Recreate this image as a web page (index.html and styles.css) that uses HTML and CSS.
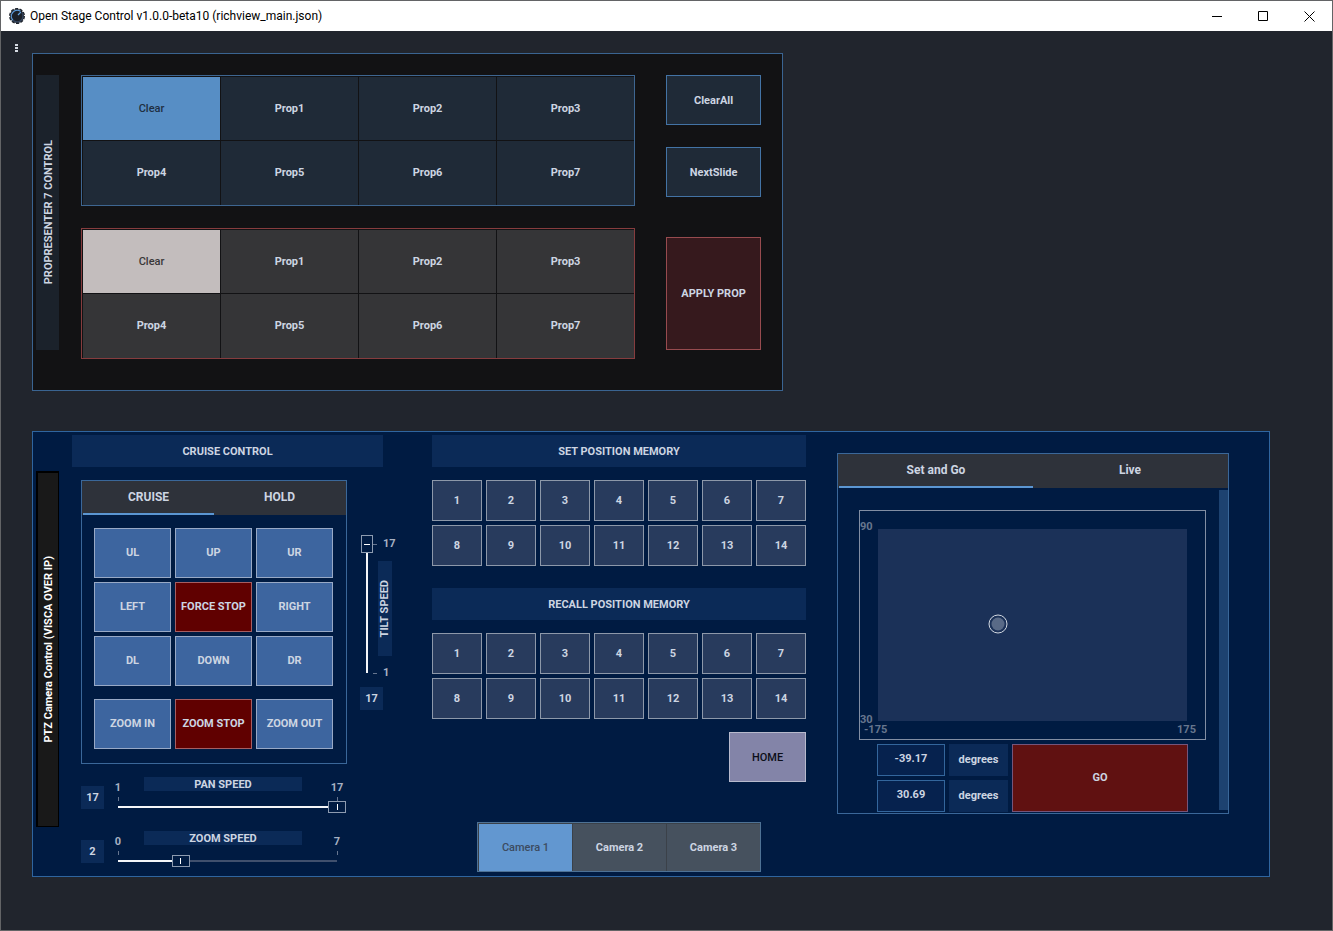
FILE: index.html
```html
<!DOCTYPE html>
<html lang="en">
<head>
<meta charset="utf-8">
<title>Open Stage Control v1.0.0-beta10 (richview_main.json)</title>
<link rel="stylesheet" href="styles.css">
</head>
<body>
<header class="titlebar">
  <svg class="app-icon" viewBox="0 0 16 16" aria-hidden="true">
    <circle cx="8" cy="8" r="7" fill="#1b2029"/>
    <circle cx="8" cy="8" r="7.300" fill="none" stroke="#1b2029" stroke-width="1.400" stroke-dasharray="3.200 1.400"/>
    <path d="M4 12.300A5.900 5.900 0 0 1 11.500 3.300" fill="none" stroke="#5c9bdc" stroke-width="1.200"/>
    <path d="M12.800 4.500A5.900 5.900 0 0 1 4 12.300" fill="none" stroke="#35455f" stroke-width="1.200"/>
    <path d="M9 7l2.800-2.800" stroke="#6aa9e6" stroke-width="1.200"/>
  </svg>
  <h1 class="title">Open Stage Control v1.0.0-beta10 (richview_main.json)</h1>
  <button class="win-btn" aria-label="Minimize"><svg viewBox="0 0 11 11"><path d="M0 5.500h10"/></svg></button>
  <button class="win-btn" aria-label="Maximize"><svg viewBox="0 0 11 11"><path d="M.5.5h9v9h-9z"/></svg></button>
  <button class="win-btn" aria-label="Close"><svg viewBox="0 0 11 11"><path d="M.5.5l10 10M10.500.5l-10 10"/></svg></button>
</header>

<main class="workspace">
  <button class="menu-btn" aria-label="Menu"><i></i><i></i><i></i></button>

  <div class="panels">
    <section class="presenter">
      <h2 class="side-label slate"><span>PROPRESENTER 7 CONTROL</span></h2>
      <div class="prop-groups">
        <div class="switch blue">
          <button class="on">Clear</button><button>Prop1</button><button>Prop2</button><button>Prop3</button>
          <button>Prop4</button><button>Prop5</button><button>Prop6</button><button>Prop7</button>
        </div>
        <div class="switch red">
          <button class="on">Clear</button><button>Prop1</button><button>Prop2</button><button>Prop3</button>
          <button>Prop4</button><button>Prop5</button><button>Prop6</button><button>Prop7</button>
        </div>
      </div>
      <div class="actions">
        <button class="action">ClearAll</button>
        <button class="action">NextSlide</button>
        <button class="action apply">APPLY PROP</button>
      </div>
    </section>

    <section class="camera">
      <h2 class="side-label black"><span>PTZ Camera Control (VISCA OVER IP)</span></h2>
      <div class="columns">
        <div class="cruise">
          <h3 class="heading">CRUISE CONTROL</h3>
          <div class="cruise-body">
            <div class="tab-box">
              <div class="tabs"><button class="current">CRUISE</button><button>HOLD</button></div>
              <div class="pad">
                <button>UL</button><button>UP</button><button>UR</button>
                <button>LEFT</button><button class="stop">FORCE STOP</button><button>RIGHT</button>
                <button>DL</button><button>DOWN</button><button>DR</button>
              </div>
              <div class="pad zoom-pad">
                <button>ZOOM IN</button><button class="stop">ZOOM STOP</button><button>ZOOM OUT</button>
              </div>
            </div>
            <div class="tilt">
              <div class="tilt-fader">
                <input id="tilt" class="fader vertical" type="range" min="1" max="17" value="17">
                <div class="tilt-scale">
                  <span class="mark">17</span>
                  <label class="tilt-name" for="tilt"><span>TILT SPEED</span></label>
                  <span class="mark">1</span>
                </div>
              </div>
              <output class="value" for="tilt">17</output>
            </div>
            <div class="speeds">
              <div class="speed">
                <output class="value" for="pan">17</output>
                <div class="speed-main">
                  <div class="scale"><span class="num">1</span><label for="pan">PAN SPEED</label><span class="num">17</span></div>
                  <input id="pan" class="fader" type="range" min="1" max="17" value="17" style="--fill:100%">
                </div>
              </div>
              <div class="speed">
                <output class="value" for="zoom">2</output>
                <div class="speed-main">
                  <div class="scale"><span class="num">0</span><label for="zoom">ZOOM SPEED</label><span class="num">7</span></div>
                  <input id="zoom" class="fader" type="range" min="0" max="7" value="2" style="--fill:28.57%">
                </div>
              </div>
            </div>
          </div>
        </div>

        <div class="memory">
          <h3 class="heading">SET POSITION MEMORY</h3>
          <div class="slots">
            <button>1</button><button>2</button><button>3</button><button>4</button><button>5</button><button>6</button><button>7</button>
            <button>8</button><button>9</button><button>10</button><button>11</button><button>12</button><button>13</button><button>14</button>
          </div>
          <h3 class="heading recall">RECALL POSITION MEMORY</h3>
          <div class="slots">
            <button>1</button><button>2</button><button>3</button><button>4</button><button>5</button><button>6</button><button>7</button>
            <button>8</button><button>9</button><button>10</button><button>11</button><button>12</button><button>13</button><button>14</button>
          </div>
          <button class="home">HOME</button>
          <div class="switch cams">
            <button class="on">Camera 1</button><button>Camera 2</button><button>Camera 3</button>
          </div>
        </div>

        <div class="tab-box position">
          <div class="tabs"><button class="current">Set and Go</button><button>Live</button></div>
          <div class="position-body">
            <div class="position-main">
              <div class="xy">
                <div class="xy-area"><span class="handle"></span></div>
                <div class="axis-y"><span>90</span><span>30</span></div>
                <div class="axis-x"><span>-175</span><span>175</span></div>
              </div>
              <div class="goto">
                <input id="deg-x" type="text" value="-39.17">
                <label for="deg-x">degrees</label>
                <input id="deg-y" type="text" value="30.69">
                <label for="deg-y">degrees</label>
                <button class="go">GO</button>
              </div>
            </div>
            <div class="scrollbar"></div>
          </div>
        </div>
      </div>
    </section>
  </div>
</main>
</body>
</html>
```

FILE: styles.css
```css
* { box-sizing: border-box; }

body {
  margin: 0;
  min-height: 100vh;
  display: flex;
  flex-direction: column;
  border: 1px solid #636466;
  background: #21252d;
  color: #cdd5e2;
  font: 700 11px/14px Roboto, "Liberation Sans", sans-serif;
}

h1, h2, h3 { margin: 0; font: inherit; }

button, input {
  margin: 0;
  padding: 0;
  border: 0;
  border-radius: 0;
  color: inherit;
  font: inherit;
}

button { background: none; }

/* Window title bar */
.titlebar {
  display: flex;
  align-items: center;
  height: 30px;
  padding-left: 8px;
  background: #fff;
  color: #000;
}
.app-icon { width: 16px; height: 16px; margin-right: 5px; }
.title { flex: 1; font: 400 12px/16px Roboto, "Liberation Sans", sans-serif; }
.win-btn {
  display: grid;
  place-items: center;
  width: 46px;
  height: 30px;
}
.win-btn svg {
  width: 11px;
  height: 11px;
  fill: none;
  stroke: #000;
}

/* Workspace */
.workspace { display: flex; flex: 1; padding-right: 62px; }
.menu-btn {
  display: flex;
  flex-direction: column;
  align-items: center;
  gap: 1px;
  width: 31px;
  height: 22px;
  padding-top: 13px;
}
.menu-btn i { width: 3px; height: 2px; background: #d5dae2; }
.panels { flex: 1; padding: 22px 0 53px; }

.side-label { display: grid; place-items: center; width: 23px; padding-left: 2px; }
.side-label span, .tilt-name span {
  writing-mode: vertical-rl;
  transform: rotate(180deg);
  white-space: nowrap;
}
.slate { height: 275px; background: #1b222b; }
.black {
  height: 356px;
  margin-top: 36px;
  border: solid #000;
  border-width: 2px 1px 1px 2px;
  background: #191919;
  color: #fff;
}

/* ProPresenter panel */
.presenter {
  display: grid;
  grid-template-columns: 23px 1fr 95px;
  width: 60.67%;
  padding: 21px 21px 31px 3px;
  border: 1px solid #3a6491;
  background: #121214;
}
.prop-groups { display: grid; gap: 22px; margin: 0 31px 0 22px; }

.switch {
  display: grid;
  grid-template: 63fr 64fr / repeat(4, 1fr);
  gap: 1px;
  height: 131px;
  padding: 1px 0 0 1px;
  border: 1px solid #3e6691;
}
.switch .on { font-weight: 500; }
.blue button { background: #1f2a37; }
.blue .on { background: #578ec5; color: #1f2f42; }
.red { border-color: #863c3e; }
.red button { background: #353537; }
.red .on { background: #c3bdbd; color: #3a3839; }

.actions { display: flex; flex-direction: column; }
.action {
  height: 50px;
  margin-bottom: 22px;
  padding-top: 2px;
  border: 1px solid #4373a5;
  background: #1f2a37;
}
.apply {
  height: 113px;
  margin: 18px 0 0;
  padding: 0;
  border-color: #974b4f;
  background: #36191d;
}

/* Camera panel */
.camera {
  display: flex;
  gap: 13px;
  margin-top: 40px;
  padding: 3px 40px 4px 3px;
  border: 1px solid #2f659f;
  background: #001b42;
}
.columns {
  display: grid;
  flex: 1;
  grid-template-columns: 329fr 374fr 392fr;
  gap: 31px;
  align-items: start;
}
.heading {
  height: 32px;
  padding-top: 1px;
  line-height: 32px;
  background: #0b2a57;
  text-align: center;
}
.value {
  display: grid;
  place-items: center;
  width: 23px;
  height: 23px;
  background: #0b2a57;
}

.cruise .heading { margin-right: 18px; }
.cruise-body {
  display: grid;
  grid-template-columns: 1fr 41px;
  gap: 13px;
  padding: 13px 0 0 9px;
}

.tab-box { border: 1px solid #3a6799; }
.tabs {
  display: grid;
  grid-template-columns: 1fr 1fr;
  height: 34px;
  padding: 0 1px;
  background: #2e323a;
  font-size: 12px;
}
.tabs button { border-bottom: 2px solid transparent; }
.tabs .current { border-color: #5b96d2; }

.pad {
  display: grid;
  grid-template-columns: repeat(3, 1fr);
  grid-auto-rows: 50px;
  gap: 4px;
  padding: 13px 13px 0 12px;
}
.zoom-pad { padding-bottom: 14px; }
.pad button {
  border: 1px solid #98a9c6;
  background: #3d659f;
  white-space: nowrap;
}
.pad .stop { border-color: #a55e62; background: #600000; }

/* Faders */
.fader {
  --fill: 100%;
  display: block;
  appearance: none;
  width: 100%;
  height: 12px;
  background: linear-gradient(90deg, #f4f6f9 var(--fill), #40506d var(--fill)) center / calc(100% - 18px) 2px no-repeat;
}
.fader::-webkit-slider-thumb {
  appearance: none;
  width: 18px;
  height: 12px;
  border: 1px solid #8d9bb0;
  background: linear-gradient(#fff, #fff) center / 1px 6px no-repeat #001b42;
}
.vertical {
  writing-mode: vertical-lr;
  direction: rtl;
  width: 12px;
  height: 147px;
  background: linear-gradient(#f4f6f9, #f4f6f9) center / 2px calc(100% - 18px) no-repeat;
}
.vertical::-webkit-slider-thumb {
  width: 12px;
  height: 18px;
  background: linear-gradient(#fff, #fff) center / 6px 1px no-repeat #001b42;
}

.tilt { padding-top: 55px; }
.tilt-fader { display: flex; padding-left: 1px; margin-bottom: 5px; }
.tilt-scale { padding-top: 2px; }
.mark {
  display: flex;
  align-items: center;
  gap: 6px;
  color: #a7b1c2;
}
.mark::before { content: ""; width: 4px; height: 1px; background: #66758f; }
.tilt-name {
  display: grid;
  place-items: center;
  width: 14px;
  height: 95px;
  margin: 10px 0 10px 5px;
  background: #0b2a57;
}

.speeds { display: grid; gap: 18px; padding-right: 1px; }
.speed { display: flex; gap: 5px; }
.speed .value { margin-top: 9px; }
.speed-main { flex: 1; }
.scale {
  display: grid;
  grid-template-columns: 18px 1fr 18px;
  height: 24px;
}
.scale label {
  height: 14px;
  margin: 0 26px 0 17px;
  background: #0b2a57;
  line-height: 16px;
  text-align: center;
}
.num {
  display: flex;
  flex-direction: column;
  align-items: center;
  align-self: end;
  gap: 2px;
  color: #a7b1c2;
}
.num::after { content: ""; width: 1px; height: 4px; background: #66758f; }

/* Position memory */
.memory { display: flex; flex-direction: column; }
.slots {
  display: grid;
  grid-template-columns: repeat(7, 1fr);
  grid-auto-rows: 41px;
  gap: 4px;
  margin-top: 13px;
}
.slots button { border: 1px solid #8d98a9; background: #283b5d; }
.recall { margin-top: 22px; }
.home {
  align-self: end;
  width: 77px;
  height: 50px;
  margin-top: 13px;
  padding-top: 2px;
  border: 1px solid #b7bacd;
  background: #8384a8;
  color: #0c0e18;
  font-weight: 500;
}
.cams {
  grid-template: 1fr / repeat(3, 1fr);
  height: 50px;
  margin: 40px 45px 0;
  border-color: #4e7295;
  background: #3b4149;
}
.cams button { background: #46515e; }
.cams .on { background: #6297d0; color: #3c4b60; }

/* Position pad */
.position { margin-top: 18px; }
.position-body { display: flex; }
.position-main { flex: 1; padding: 22px 13px 1px 21px; }
.scrollbar { width: 9px; margin: 2px 0 3px; background: #1d4270; }
.xy {
  display: grid;
  grid-template: 18px 1fr 18px / 18px 1fr 18px;
  height: 230px;
  border: 1px solid #828ea3;
  color: #67768e;
  line-height: 8px;
}
.xy-area { position: relative; grid-area: 2 / 2; background: #1b3158; }
.handle {
  position: absolute;
  left: 38.8%;
  top: 49.5%;
  width: 19px;
  height: 19px;
  padding: 2px;
  border: 1px solid #d3d9e2;
  border-radius: 50%;
  background: #596a87 content-box;
  transform: translate(-50%, -50%);
}
.axis-y {
  display: flex;
  grid-area: 1 / 1 / -1 / 2;
  flex-direction: column;
  justify-content: space-between;
  padding: 12px 0 15px;
}
.axis-x {
  display: flex;
  grid-area: 3 / 1 / 4 / -1;
  align-items: center;
  justify-content: space-between;
  padding: 0 9px 0 4px;
}
.goto {
  display: grid;
  grid-template: 32px 32px / 68px 59px 1fr;
  gap: 4px;
  margin: 4px 18px 0;
}
.goto input {
  width: 100%;
  padding-bottom: 2px;
  border: 1px solid #33669c;
  background: #06224e;
  text-align: center;
}
.goto label { background: #0b2a57; line-height: 32px; text-align: center; }
.go {
  grid-area: 1 / 3 / 3 / 4;
  border: 1px solid #75557b;
  background: #601111;
}
```
